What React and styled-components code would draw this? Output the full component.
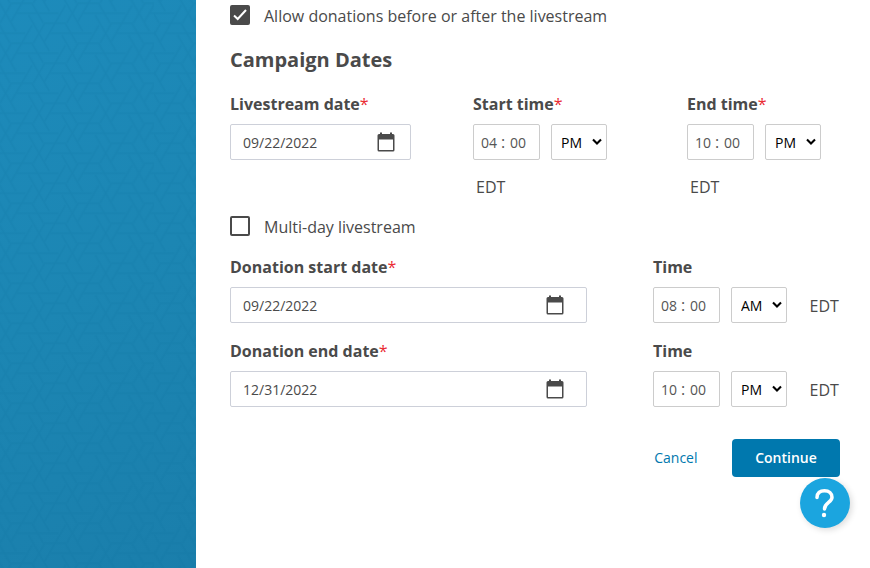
import styled, { createGlobalStyle } from "styled-components";

const GlobalStyle = createGlobalStyle`
  * {
    box-sizing: border-box;
  }

  body {
    margin: 0;
    background: #ffffff;
    color: #4a4a4a;
    font-family: "Open Sans", sans-serif;
    font-size: 16px;
    line-height: 24px;
  }

  input,
  select,
  button {
    font-family: inherit;
  }
`;

const Page = styled.div`
  display: flex;
  height: 568px;
  overflow: hidden;
`;

const Sidebar = styled.aside`
  flex: 0 0 196px;
  background: linear-gradient(150deg, #1d8bbb 0%, #1c86b3 50%, #1a7eab 100%);

  svg {
    display: block;
  }
`;

const Form = styled.form`
  width: 610px;
  margin-left: 34px;
  padding-top: 4px;
`;

const CheckRow = styled.label`
  display: flex;
  align-items: center;
  height: 24px;
`;

const Checkbox = styled.input`
  position: absolute;
  opacity: 0;
`;

const Box = styled.span`
  display: flex;
  align-items: center;
  justify-content: center;
  width: 20px;
  height: 20px;
  margin: 0 14px 2px 0;
  border: 2px solid #4a4a4a;
  border-radius: 2px;
  background: ${({ $checked }) => ($checked ? "#4a4a4a" : "#ffffff")};

  svg {
    flex-shrink: 0;
  }
`;

const Title = styled.h2`
  height: 28px;
  margin: 18px 0;
  font-size: 20px;
  font-weight: 700;
  line-height: 28px;
`;

const Row = styled.div`
  display: grid;
  grid-template-columns: ${({ $columns }) => $columns};
  margin-top: ${({ $top }) => $top || 0}px;
`;

const Label = styled.div`
  height: 24px;
  margin-bottom: 8px;
  font-weight: 700;
  white-space: nowrap;
`;

const Star = styled.span`
  color: #ea2a33;
  font-weight: 400;
`;

const DateBox = styled.div`
  display: flex;
  align-items: center;
  justify-content: space-between;
  width: ${({ $width }) => $width}px;
  height: 36px;
  padding: 0 ${({ $end }) => $end}px 0 12px;
  border: 1px solid #cdd0d9;
  border-radius: 2px;
`;

const DateInput = styled.input`
  width: 100px;
  padding: 2px 0 0;
  border: 0;
  outline: 0;
  background: none;
  color: #4a4a4a;
  font-size: 14px;
  line-height: 20px;
`;

const TimeGroup = styled.div`
  display: flex;
  flex-wrap: wrap;
  align-items: center;
`;

const Clock = styled.div`
  display: flex;
  align-items: center;
  width: 67px;
  height: 36px;
  margin-right: 11px;
  padding-left: 7px;
  border: 1px solid #cccccc;
  border-radius: 2px;
  color: #555555;
  font-size: 14px;
`;

const Digits = styled.input`
  width: 17px;
  padding: 2px 0 0;
  border: 0;
  outline: 0;
  color: #555555;
  font-size: 14px;
  line-height: 20px;
`;

const Colon = styled.span`
  width: 12px;
  padding-right: 2px;
  text-align: center;
  font-size: 16px;
`;

const MeridiemBox = styled.div`
  display: grid;
  grid-template-columns: 1fr 14px;
  align-items: center;
  width: 56px;
  height: 36px;
  border: 1px solid #cccccc;
  border-radius: 2px;

  svg {
    grid-area: 1 / 2;
    pointer-events: none;
  }
`;

const Meridiem = styled.select`
  grid-area: 1 / 1 / 2 / 3;
  height: 34px;
  padding: 1px 0 0 9px;
  border: 0;
  outline: 0;
  appearance: none;
  background: none;
  color: #000000;
  font-size: 14px;
`;

const Zone = styled.span`
  margin: ${({ $below }) => ($below ? "15px 60px 0 3px" : "2px 0 0 22.5px")};
`;

const Actions = styled.div`
  display: flex;
  justify-content: flex-end;
  align-items: center;
  margin-top: 32px;
`;

const Cancel = styled.button`
  margin-right: 34.5px;
  padding: 0 0 2px;
  border: 0;
  background: none;
  color: #0078ae;
  font-size: 14px;
  font-weight: 500;
`;

const Continue = styled.button`
  width: 108px;
  height: 38px;
  padding: 0 0 2px;
  border: 0;
  border-radius: 4px;
  background: #0078ae;
  color: #ffffff;
  font-size: 14px;
  font-weight: 600;
`;

const Help = styled.button`
  position: fixed;
  top: 478px;
  left: 800px;
  width: 50px;
  height: 50px;
  padding: 0;
  border: 0;
  border-radius: 50%;
  background: #1ba5df;
  box-shadow: 2px 2px 6px rgba(0, 0, 0, 0.14);

  svg {
    display: block;
  }
`;

// one repeat of the woven hexagon texture, moved over the neighbouring cells
const CELLS = [-1, 0, 1, 2, 3].flatMap((col) =>
  [-2, -1, 0, 1, 2].map((row) => [
    col * 33.33,
    row * 40 + (col % 2 ? 20 : 0),
  ])
);

function Texture() {
  return (
    <svg width="196" height="568">
      <defs>
        <g id="strands" fill="none" stroke="#0b6f9c" strokeWidth="1.5">
          {CELLS.map(([x, y], index) => (
            <g key={index} transform={`translate(${x} ${y})`}>
              {[0, 120, 240].map((angle) => (
                <path
                  key={angle}
                  d="M-11.1 -20H11.1M-38 10H3.5"
                  transform={`rotate(${angle})`}
                />
              ))}
            </g>
          ))}
        </g>
        <pattern
          id="weave"
          x="55"
          y="43.3"
          width="66.66"
          height="40"
          patternUnits="userSpaceOnUse"
        >
          <use href="#strands" />
        </pattern>
        <pattern
          id="weaveShifted"
          x="37.5"
          y="43.3"
          width="66.66"
          height="40"
          patternUnits="userSpaceOnUse"
        >
          <use href="#strands" />
        </pattern>
      </defs>
      <g opacity="0.13">
        <rect width="154" height="568" fill="url(#weave)" />
        <rect x="154" width="42" height="568" fill="url(#weaveShifted)" />
      </g>
    </svg>
  );
}

function CalendarIcon() {
  return (
    <svg width="18" height="20" viewBox="0 -0.6 18 20">
      <path
        fill="#4a4a4a"
        fillRule="evenodd"
        d="M3 0h2v1.5h8V0h2v1.5h1a1.5 1.5 0 0 1 1.5 1.5v14.5A1.5 1.5 0 0 1 16 19H2a1.5 1.5 0 0 1-1.5-1.500V3A1.5 1.5 0 0 1 2 1.500h1zM2 7v10.500h14V7z"
      />
    </svg>
  );
}

function Chevron() {
  return (
    <svg width="10" height="8" viewBox="0 0 10 8">
      <path
        d="M1 1.500L5 5.500L9 1.500"
        fill="none"
        stroke="#000000"
        strokeWidth="2.1"
      />
    </svg>
  );
}

function Check({ label, checked }) {
  return (
    <CheckRow>
      <Checkbox type="checkbox" defaultChecked={checked} />
      <Box $checked={checked}>
        {checked && (
          <svg width="16" height="14" viewBox="0 0 16 14">
            <path
              d="M2 7.500L5.700 11L14 2"
              fill="none"
              stroke="#ffffff"
              strokeWidth="2"
            />
          </svg>
        )}
      </Box>
      {label}
    </CheckRow>
  );
}

function DateField({ label, value, width, end }) {
  return (
    <div>
      <Label>
        {label}
        <Star>*</Star>
      </Label>
      <DateBox $width={width} $end={end}>
        <DateInput defaultValue={value} />
        <CalendarIcon />
      </DateBox>
    </div>
  );
}

function TimeField({ label, required, hour, period, below }) {
  return (
    <div>
      <Label>
        {label}
        {required && <Star>*</Star>}
      </Label>
      <TimeGroup>
        <Clock>
          <Digits defaultValue={hour} />
          <Colon>:</Colon>
          <Digits defaultValue="00" />
        </Clock>
        <MeridiemBox>
          <Meridiem defaultValue={period}>
            <option>AM</option>
            <option>PM</option>
          </Meridiem>
          <Chevron />
        </MeridiemBox>
        <Zone $below={below}>EDT</Zone>
      </TimeGroup>
    </div>
  );
}

export default function App() {
  return (
    <>
      <GlobalStyle />
      <Page>
        <Sidebar>
          <Texture />
        </Sidebar>
        <Form>
          <Check label="Allow donations before or after the livestream" checked />
          <Title>Campaign Dates</Title>
          <Row $columns="243px 214px 153px">
            <DateField
              label="Livestream date"
              value="09/22/2022"
              width={181}
              end={15}
            />
            <TimeField label="Start time" required hour="04" period="PM" below />
            <TimeField label="End time" required hour="10" period="PM" below />
          </Row>
          <Row $columns="1fr" $top={16}>
            <Check label="Multi-day livestream" />
          </Row>
          <Row $columns="423px 187px" $top={16}>
            <DateField
              label="Donation start date"
              value="09/22/2022"
              width={357}
              end={22}
            />
            <TimeField label="Time" hour="08" period="AM" />
          </Row>
          <Row $columns="423px 187px" $top={16}>
            <DateField
              label="Donation end date"
              value="12/31/2022"
              width={357}
              end={22}
            />
            <TimeField label="Time" hour="10" period="PM" />
          </Row>
          <Actions>
            <Cancel type="button">Cancel</Cancel>
            <Continue type="button">Continue</Continue>
          </Actions>
        </Form>
        <Help type="button" aria-label="Help">
          <svg width="50" height="50" viewBox="0 0 50 50">
            <path
              d="M17 19.500C17 15 20 12.700 24.500 12.700C29 12.700 32 15.500 32 19.300C32 24.500 24.500 24.500 24.500 31"
              fill="none"
              stroke="#ffffff"
              strokeWidth="3.500"
              strokeLinecap="round"
            />
            <circle cx="24" cy="37" r="2.200" fill="#ffffff" />
          </svg>
        </Help>
      </Page>
    </>
  );
}
